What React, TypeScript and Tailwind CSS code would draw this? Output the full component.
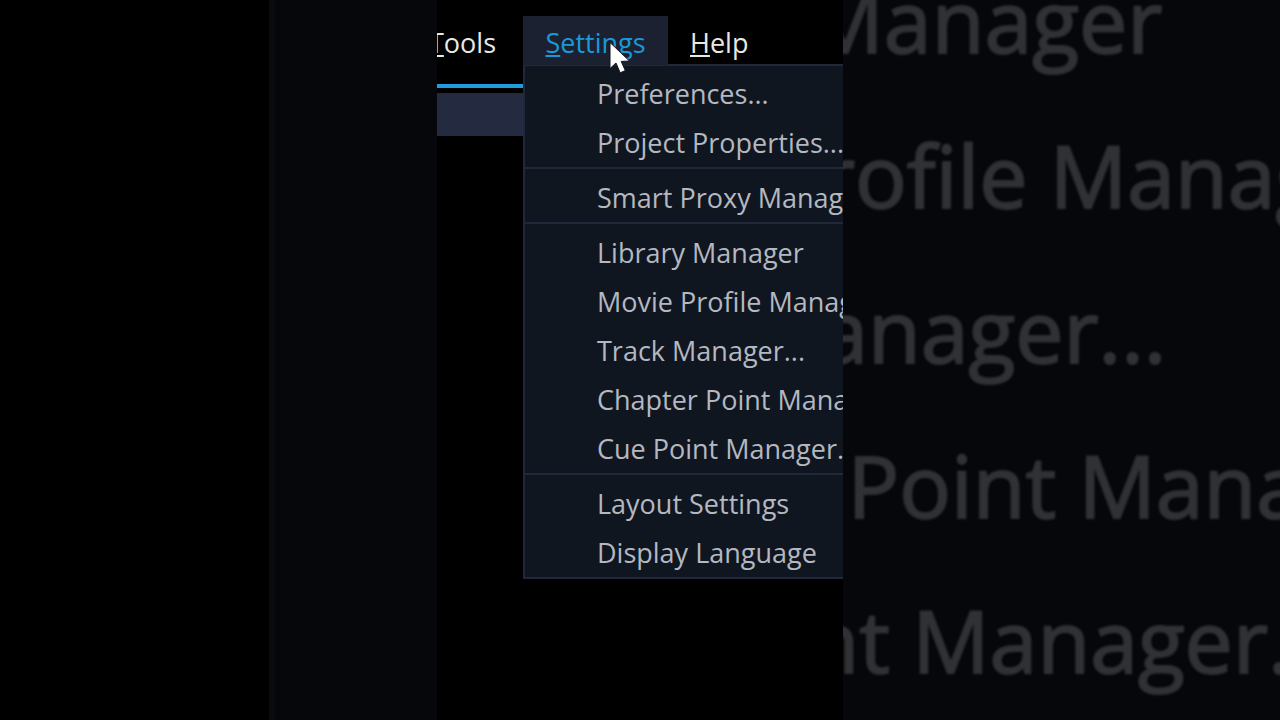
import React from "react";

const menuGroups: string[][] = [
  ["Preferences...", "Project Properties..."],
  ["Smart Proxy Manager..."],
  [
    "Library Manager",
    "Movie Profile Manager...",
    "Track Manager...",
    "Chapter Point Manager...",
    "Cue Point Manager...",
  ],
  ["Layout Settings", "Display Language"],
];

function Mnemonic({ label }: { label: string }) {
  return (
    <span>
      <span className="underline decoration-2 underline-offset-2">{label[0]}</span>
      {label.slice(1)}
    </span>
  );
}

function Pointer() {
  return (
    <svg
      className="pointer-events-none absolute top-[39px] left-[170px] z-20 h-[36px] w-[26px]"
      viewBox="0 0 26 36"
      aria-hidden="true"
    >
      <path
        d="M3 3.5 L3 29.5 L9 24 L13.2 33.8 L18.3 31.6 L14.2 22.4 L22.5 22 Z"
        fill="#ffffff"
        stroke="#10131b"
        strokeWidth="1"
      />
    </svg>
  );
}

function SettingsMenu() {
  return (
    <div
      role="menu"
      aria-label="Settings"
      className="absolute top-[64px] left-[86px] z-10 w-[420px] border-2 border-[#20283a] bg-[#10161f] pt-[3px]"
    >
      {menuGroups.map((group, i) => (
        <div
          key={group[0]}
          role="group"
          className={i > 0 ? "border-t-2 border-[#20283a] pt-1" : ""}
        >
          {group.map((item) => (
            <button
              key={item}
              type="button"
              role="menuitem"
              className="block h-[49px] w-full pl-[72px] text-left whitespace-nowrap text-[#b4b8c1]"
            >
              {item}
            </button>
          ))}
        </div>
      ))}
    </div>
  );
}

function Backdrop() {
  return (
    <div
      aria-hidden="true"
      className="col-start-1 row-start-1 flex h-screen min-w-0 overflow-hidden text-[86px] leading-none text-[#303134]"
    >
      <div className="w-[21%] shrink-0 bg-black" />
      <div className="min-w-0 grow overflow-hidden border-l-[6px] border-[#090b0f] bg-[#05070b]">
        <div className="-mt-[58px] pl-[229px] blur-[1px] [-webkit-text-stroke:2px_#303134]">
          {menuGroups[2].map((item) => (
            <div key={item} className="flex h-[155px] items-center whitespace-nowrap">
              {item}
            </div>
          ))}
        </div>
      </div>
    </div>
  );
}

export default function App() {
  return (
    <div className="grid min-h-screen grid-cols-1 overflow-hidden bg-black font-['Open_Sans','Noto_Sans',sans-serif]">
      <Backdrop />
      <main className="relative z-10 col-start-1 row-start-1 mx-auto w-[406px] overflow-hidden bg-black text-[27px] leading-9">
        <nav className="flex pt-4 text-[#e9e9e4]" aria-label="Main menu">
          <button type="button" className="flex h-[49px] w-[86px] shrink-0 items-center justify-end pt-1 pr-[27px]">
            <Mnemonic label="Tools" />
          </button>
          <button
            type="button"
            aria-haspopup="menu"
            aria-expanded="true"
            className="relative z-20 flex h-[49px] w-[145px] shrink-0 items-center justify-center bg-[#1b2130] pt-1 text-[#1b98d8]"
          >
            <Mnemonic label="Settings" />
          </button>
          <button type="button" className="flex h-[49px] items-center px-[22px] pt-1">
            <Mnemonic label="Help" />
          </button>
        </nav>
        <div className="mt-[19px] h-1 bg-[#209bdc]" />
        <div className="mt-[5px] h-[43px] bg-[#242b40]" />
        <SettingsMenu />
        <Pointer />
      </main>
    </div>
  );
}
